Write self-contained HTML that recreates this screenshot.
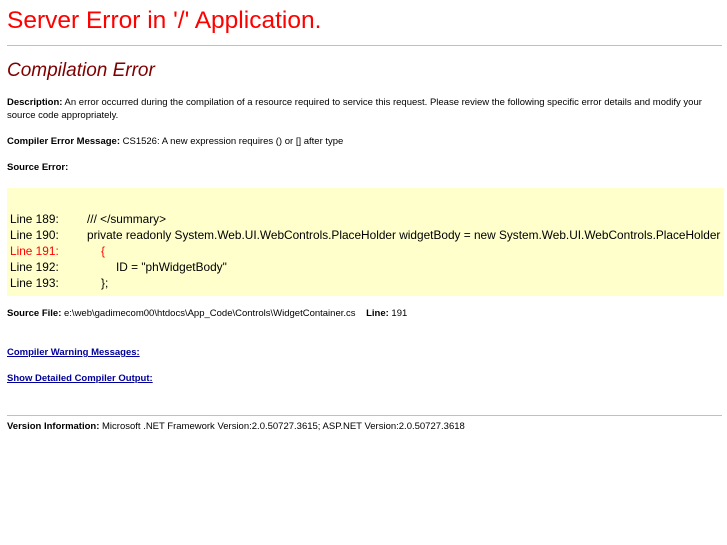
<!DOCTYPE html>
<html><head><meta charset="utf-8"><style>
body{margin:0;background:#fff;font-family:"Liberation Sans",sans-serif;color:#000;width:727px;height:545px;overflow:hidden;position:relative}
.a{position:absolute;white-space:nowrap}
.s{font-size:9.5px;line-height:13px}
b{font-weight:bold}
hr{position:absolute;margin:0;border:0;height:1px;background:#c0c0c0;left:7px;width:715px}
.code{position:absolute;left:7px;top:188px;width:717px;height:108px;background:#ffffcc}
.c{font-size:11.85px;line-height:16px}
a{color:#000099;text-decoration:underline;font-weight:bold}
</style></head><body>
<div class="a" style="left:7px;top:6px;font-size:24.5px;line-height:30px;color:red">Server Error in '/' Application.</div>
<hr style="top:45px">
<div class="a" style="left:7px;top:60px;font-size:19px;line-height:22px;color:maroon;font-style:italic">Compilation Error</div>
<div class="a s" style="left:7px;top:96px"><b>Description:</b> An error occurred during the compilation of a resource required to service this request. Please review the following specific error details and modify your</div>
<div class="a s" style="left:7px;top:109px">source code appropriately.</div>
<div class="a s" style="left:7px;top:135px"><b>Compiler Error Message:</b> CS1526: A new expression requires () or [] after type</div>
<div class="a s" style="left:7px;top:161px"><b>Source Error:</b></div>
<div class="code"></div>
<div class="a c" style="left:10px;top:211px">Line 189:</div><div class="a c" style="left:87px;top:211px">/// &lt;/summary&gt;</div>
<div class="a c" style="left:10px;top:227px">Line 190:</div><div class="a c" style="left:87px;top:227px">private readonly System.Web.UI.WebControls.PlaceHolder widgetBody = new System.Web.UI.WebControls.PlaceHolder</div>
<div class="a c" style="left:10px;top:243px;color:red">Line 191:</div><div class="a c" style="left:101px;top:243px;color:red">{</div>
<div class="a c" style="left:10px;top:259px">Line 192:</div><div class="a c" style="left:116px;top:259px">ID = "phWidgetBody"</div>
<div class="a c" style="left:10px;top:275px">Line 193:</div><div class="a c" style="left:101px;top:275px">};</div>
<div class="a s" style="left:7px;top:307px"><b>Source File:</b> e:\web\gadimecom00\htdocs\App_Code\Controls\WidgetContainer.cs &nbsp;&nbsp;&nbsp;<b>Line:</b> 191</div>
<div class="a s" style="left:7px;top:346px"><a>Compiler Warning Messages:</a></div>
<div class="a s" style="left:7px;top:372px"><a>Show Detailed Compiler Output:</a></div>
<hr style="top:415px">
<div class="a s" style="left:7px;top:420px"><b>Version Information:</b> Microsoft .NET Framework Version:2.0.50727.3615; ASP.NET Version:2.0.50727.3618</div>
</body></html>
